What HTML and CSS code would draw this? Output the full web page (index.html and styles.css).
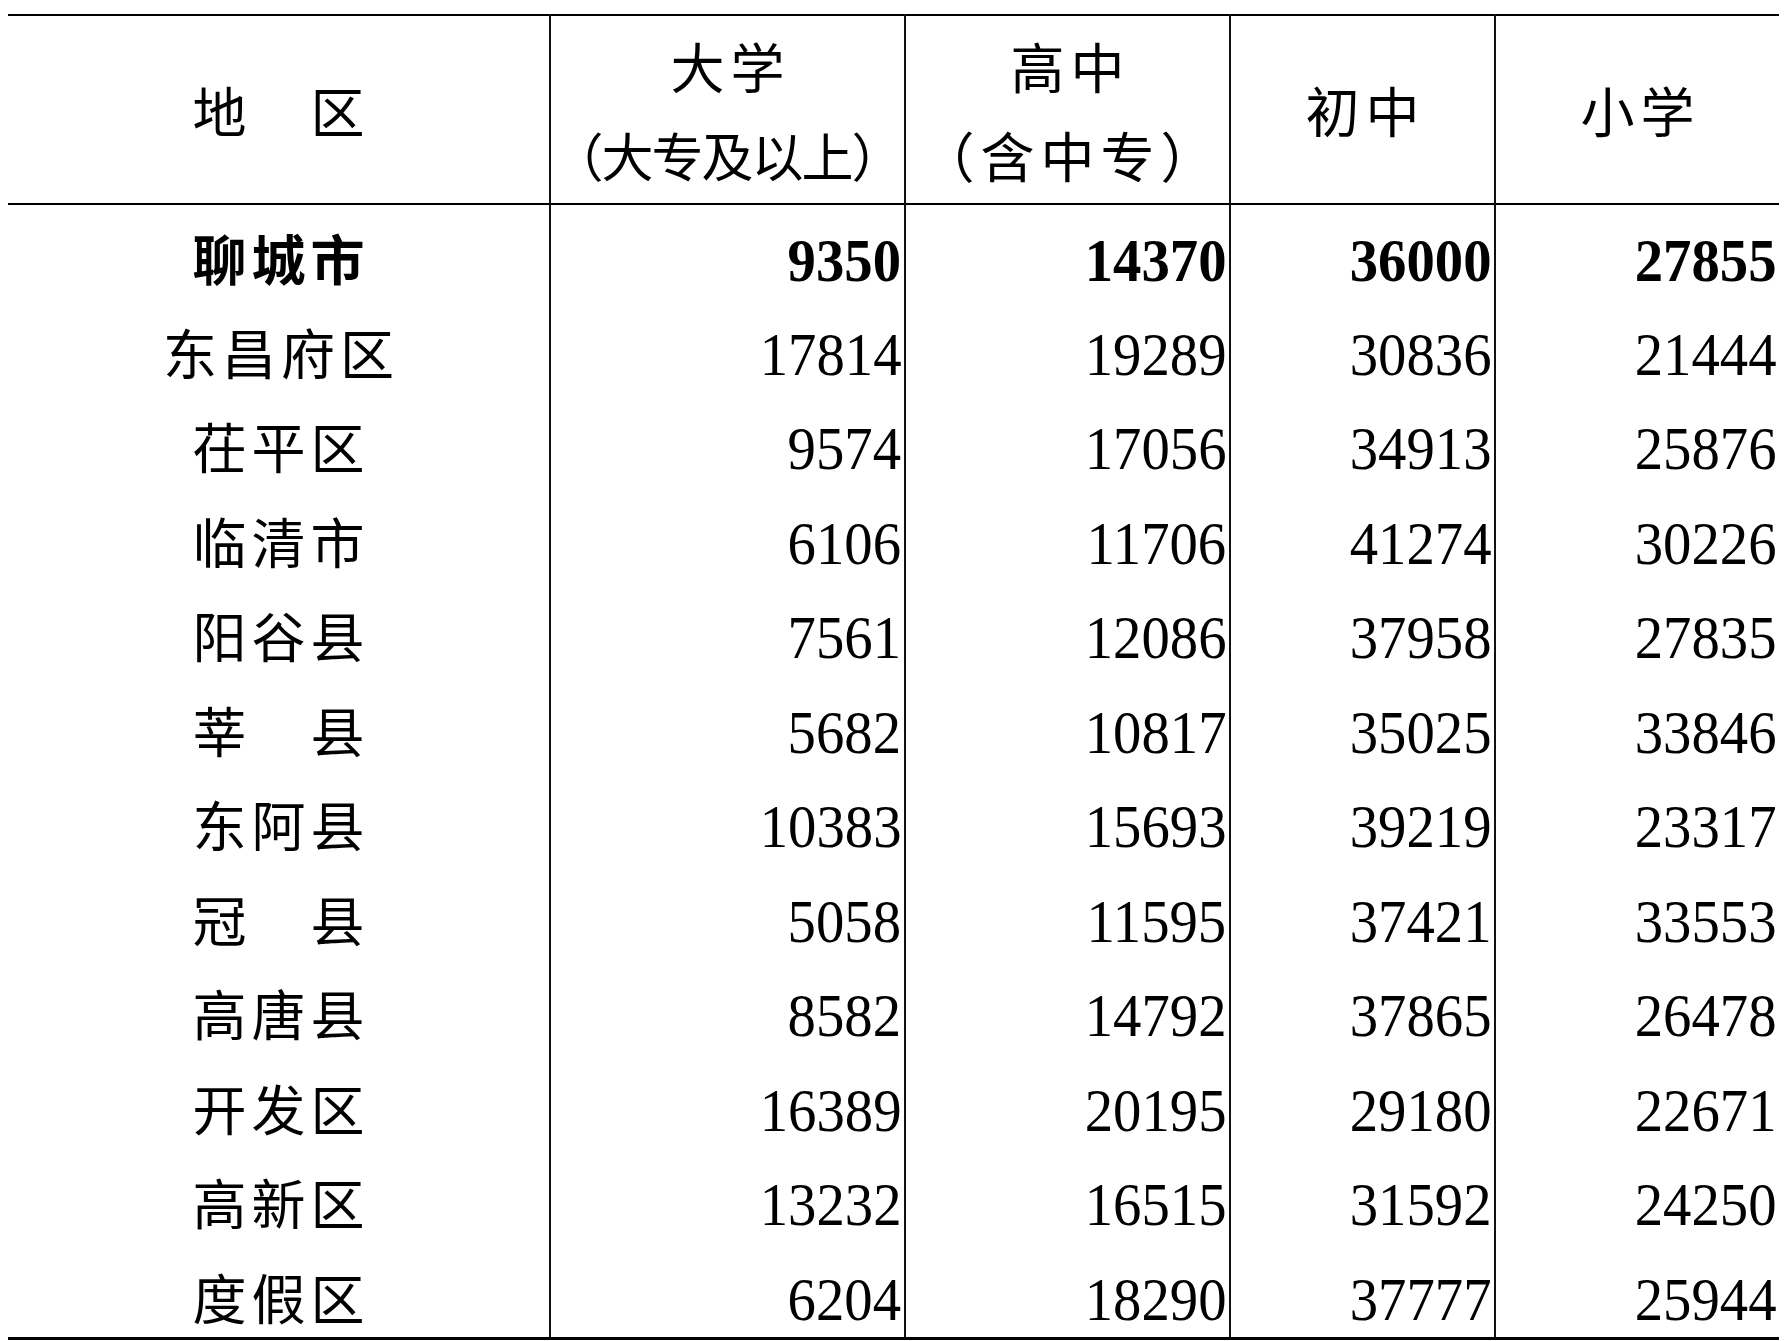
FILE: index.html
```html
<!DOCTYPE html>
<html lang="zh-CN">
<head>
<meta charset="utf-8">
<title>聊城市各地区受教育程度人口</title>
<link rel="stylesheet" href="styles.css">
</head>
<body>
<div class="page">
<table class="edu">
  <colgroup>
    <col class="c1"><col class="c2"><col class="c3"><col class="c4"><col class="c5">
  </colgroup>
  <thead>
    <tr>
      <th class="hname">地　区</th>
      <th><div class="hl">大学</div><div class="hl tight">（大专及以上）</div></th>
      <th><div class="hl">高中</div><div class="hl">（含中专）</div></th>
      <th><div class="hl">初中</div></th>
      <th><div class="hl">小学</div></th>
    </tr>
  </thead>
  <tbody>
    <tr class="total"><td class="name">聊城市</td><td class="num"><span>9350</span></td><td class="num"><span>14370</span></td><td class="num"><span>36000</span></td><td class="num"><span>27855</span></td></tr>
    <tr><td class="name">东昌府区</td><td class="num"><span>17814</span></td><td class="num"><span>19289</span></td><td class="num"><span>30836</span></td><td class="num"><span>21444</span></td></tr>
    <tr><td class="name">茌平区</td><td class="num"><span>9574</span></td><td class="num"><span>17056</span></td><td class="num"><span>34913</span></td><td class="num"><span>25876</span></td></tr>
    <tr><td class="name">临清市</td><td class="num"><span>6106</span></td><td class="num"><span>11706</span></td><td class="num"><span>41274</span></td><td class="num"><span>30226</span></td></tr>
    <tr><td class="name">阳谷县</td><td class="num"><span>7561</span></td><td class="num"><span>12086</span></td><td class="num"><span>37958</span></td><td class="num"><span>27835</span></td></tr>
    <tr><td class="name">莘　县</td><td class="num"><span>5682</span></td><td class="num"><span>10817</span></td><td class="num"><span>35025</span></td><td class="num"><span>33846</span></td></tr>
    <tr><td class="name">东阿县</td><td class="num"><span>10383</span></td><td class="num"><span>15693</span></td><td class="num"><span>39219</span></td><td class="num"><span>23317</span></td></tr>
    <tr><td class="name">冠　县</td><td class="num"><span>5058</span></td><td class="num"><span>11595</span></td><td class="num"><span>37421</span></td><td class="num"><span>33553</span></td></tr>
    <tr><td class="name">高唐县</td><td class="num"><span>8582</span></td><td class="num"><span>14792</span></td><td class="num"><span>37865</span></td><td class="num"><span>26478</span></td></tr>
    <tr><td class="name">开发区</td><td class="num"><span>16389</span></td><td class="num"><span>20195</span></td><td class="num"><span>29180</span></td><td class="num"><span>22671</span></td></tr>
    <tr><td class="name">高新区</td><td class="num"><span>13232</span></td><td class="num"><span>16515</span></td><td class="num"><span>31592</span></td><td class="num"><span>24250</span></td></tr>
    <tr><td class="name">度假区</td><td class="num"><span>6204</span></td><td class="num"><span>18290</span></td><td class="num"><span>37777</span></td><td class="num"><span>25944</span></td></tr>
  </tbody>
</table>
</div>
</body>
</html>
```

FILE: styles.css
```css
html, body {
  margin: 0;
  padding: 0;
  background: #ffffff;
}

.page {
  padding: 14px 9px 0 8px;
}

.edu {
  width: 1771px;
  table-layout: fixed;
  border-collapse: collapse;
  color: #000;
  border-top: 2px solid #000;
  border-bottom: 3px solid #000;
}

.c1 { width: 542px; }
.c2 { width: 355px; }
.c3 { width: 325px; }
.c4 { width: 265px; }
.c5 { width: 284px; }

.edu th,
.edu td {
  padding: 0;
  border-left: 2px solid #111;
}

.edu th:first-child,
.edu td:first-child {
  border-left: none;
}

.edu thead tr {
  border-bottom: 2px solid #000;
}

.edu th {
  height: 187px;
  vertical-align: middle;
  text-align: center;
  font-family: "Noto Sans CJK SC", "Noto Sans", sans-serif;
  font-weight: 400;
  font-size: 54px;
}

.edu th.hname {
  line-height: 61px;
  letter-spacing: 5px;
  text-indent: 5px;
}

.hl {
  line-height: 89px;
  letter-spacing: 6px;
  text-indent: 6px;
  white-space: nowrap;
}

.hl.tight {
  font-size: 52px;
  letter-spacing: -2px;
  text-indent: -2px;
}

.edu td {
  height: 94.5px;
  box-sizing: border-box;
  vertical-align: top;
  line-height: 50px;
}

.edu td.name {
  padding-top: 28px;
  text-align: center;
  font-family: "Noto Sans CJK SC", "Noto Sans", sans-serif;
  font-size: 54px;
  letter-spacing: 5px;
  text-indent: 5px;
  white-space: nowrap;
}

.edu td.num {
  padding-top: 31px;
  padding-right: 3px;
  text-align: right;
  font-family: "Liberation Serif", "Times New Roman", serif;
  font-size: 61px;
}

.num span {
  display: inline-block;
  transform: scaleX(0.93);
  transform-origin: right center;
}

.edu .total td {
  font-weight: 700;
}
```
